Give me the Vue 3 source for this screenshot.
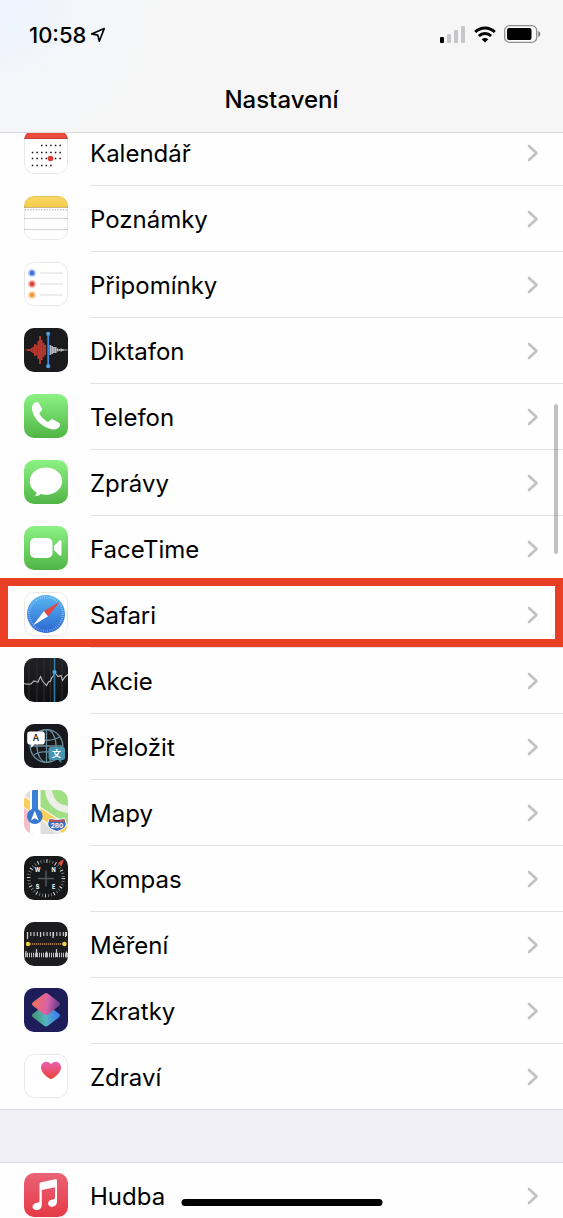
<template>
  <div class="screen">
    <header class="header">
      <div class="status">
        <div class="clock">
          <span>10:58</span>
          <svg class="location" viewBox="0 0 16 16">
            <path d="M14.2 1.6 1.6 6.9l6.2 1.2 1.5 6.2z" fill="none" stroke="#000" stroke-width="1.6" stroke-linejoin="round" />
          </svg>
        </div>
        <div class="indicators">
          <svg class="signal" viewBox="0 0 26 17">
            <rect x="0" y="11" width="4" height="6" rx="1" fill="#000" />
            <rect x="7" y="8" width="4" height="9" rx="1" fill="#c6c6c8" />
            <rect x="14" y="4" width="4" height="13" rx="1" fill="#c6c6c8" />
            <rect x="21" y="0" width="4" height="17" rx="1" fill="#c6c6c8" />
          </svg>
          <svg class="wifi" viewBox="0 0 22 17">
            <g fill="none" stroke="#000" stroke-width="2.9">
              <path d="M1.2 6.1C6.6.6 15.4.6 20.8 6.1" />
              <path d="M4.9 10c3.4-3.4 8.800-3.400 12.200 0" />
            </g>
            <path d="M7.7 13.2c1.9-1.7 4.7-1.7 6.6 0L11 16.5z" fill="#000" />
          </svg>
          <svg class="battery" viewBox="0 0 37 18">
            <rect x="0.7" y="0.7" width="32" height="16.6" rx="4.8" fill="#fafafa" stroke="#8e8e90" stroke-width="1.3" />
            <rect x="3" y="3" width="24.5" height="12" rx="2" fill="#000" />
            <path d="M34.300 6v6c2.600-1 2.600-5 0-6z" fill="#77777a" />
          </svg>
        </div>
      </div>
      <h1 class="title">Nastavení</h1>
    </header>

    <main class="content">
      <nav v-for="(group, g) in groups" :key="g" class="group">
        <a v-for="item in group" :key="item.icon" href="#" class="row" :class="{ marked: item.marked }">
          <svg class="icon" viewBox="0 0 44 44" aria-hidden="true">
            <g v-if="item.icon === 'calendar'">
              <rect width="44" height="44" fill="#fff" />
              <rect width="44" height="9" fill="#ea4b3d" />
              <rect y="8" width="44" height="1" fill="#c93a2e" />
              <g stroke="#111" stroke-width="1.5" stroke-dasharray="1.5 3.1">
                <path d="M17 15.5h20.5M7.8 22.5h29.7M7.8 28.500h29.700M7.800 35.500h20.500" />
              </g>
              <circle cx="26.500" cy="28.500" r="2.800" fill="#dc3a30" />
            </g>

            <g v-else-if="item.icon === 'notes'">
              <rect width="44" height="44" fill="#fff" />
              <rect width="44" height="11" fill="url(#notes-top)" />
              <path d="M0 11.500h44" stroke="#c9b98a" />
              <path d="M1 13.800h43" stroke="#b9b9b9" stroke-width="1.500" stroke-dasharray="1.200 1.500" />
              <path d="M0 22.500h44M0 33.500h44" stroke="#d2d2d4" />
            </g>

            <g v-else-if="item.icon === 'reminders'">
              <rect width="44" height="44" fill="#fff" />
              <g v-for="dot in reminderDots" :key="dot.y">
                <circle cx="8" :cy="dot.y" r="3.800" :fill="dot.color" fill-opacity="0.450" />
                <circle cx="8" :cy="dot.y" r="2.200" :fill="dot.color" />
                <path :d="`M16 ${dot.y}h23`" stroke="#dcdce0" />
              </g>
            </g>

            <g v-else-if="item.icon === 'memos'">
              <rect width="44" height="44" fill="#1b1b1e" />
              <rect
                v-for="(h, i) in redWave"
                :key="'r' + i"
                :x="1.5 + i * 1.7"
                :y="22 - h"
                width="1.8"
                :height="h * 2"
                fill="#bd3930"
              />
              <rect
                v-for="(h, i) in grayWave"
                :key="'g' + i"
                :x="25.5 + i * 1.8"
                :y="22 - h"
                width="1.7"
                :height="h * 2"
                fill="#b9b9bd"
              />
              <path d="M24.200 6v32" stroke="#3f87d4" stroke-width="1.800" />
              <circle cx="24.200" cy="5.800" r="2.100" fill="#4f9be8" />
              <circle cx="24.200" cy="38.200" r="2.100" fill="#4f9be8" />
            </g>

            <g v-else-if="item.icon === 'phone'">
              <rect width="44" height="44" fill="url(#green)" />
              <path
                d="M8.500 11.500c1-2 2.700-3.400 4.400-3.400 1.100 0 1.900.8 2.700 2.200l2 3.600c.7 1.300.5 2.300-.4 3.200l-1.300 1.300c-.6.600-.6 1.200-.2 1.900 1.900 3.100 4.200 5.400 7.300 7.300.7.400 1.300.4 1.900-.2l1.400-1.300c.9-.9 1.900-1.100 3.200-.4l4.700 2.500c1.700.9 2.300 1.900 1.900 3.100-.8 2.500-3.300 4.300-6.400 4.300-10.200-.8-21.700-11.500-21.700-21.800 0-.8.100-1.500.5-2.300z"
                fill="#fff"
              />
            </g>

            <g v-else-if="item.icon === 'messages'">
              <rect width="44" height="44" fill="url(#green)" />
              <path
                d="M22 7.600c9 0 16.200 6 16.200 13.600S31 34.700 22 34.700c-1.900 0-3.700-.3-5.400-.7-1.300 1.300-3.400 2.300-5.900 2.300 1.200-1 1.800-2.400 1.900-3.900-4.200-2.500-6.800-6.600-6.800-11.200C5.800 13.600 13 7.600 22 7.600z"
                fill="#fff"
              />
            </g>

            <g v-else-if="item.icon === 'facetime'">
              <rect width="44" height="44" fill="url(#green)" />
              <rect x="6" y="12" width="22.500" height="20" rx="5" fill="#fff" />
              <path d="M30 19.800l5.300-5c1-.9 2.200-.5 2.200.8v12.800c0 1.300-1.200 1.700-2.200.8l-5.300-5z" fill="#fff" />
            </g>

            <g v-else-if="item.icon === 'safari'">
              <rect width="44" height="44" fill="#fff" />
              <circle cx="22" cy="22" r="19" fill="url(#safari-disc)" />
              <circle cx="22" cy="22" r="16.800" fill="none" stroke="#cfe6fb" stroke-opacity="0.600" stroke-width="2" stroke-dasharray="0.700 1.500" />
              <path d="M36.200 9.500 19.800 19.200 24 24.200z" fill="#e5473f" />
              <path d="M9 33.500 19.800 19.200 24 24.200z" fill="#fff" />
            </g>

            <g v-else-if="item.icon === 'stocks'">
              <rect width="44" height="44" fill="url(#stocks-bg)" />
              <path d="M5 0v44M13 0v44M20 0v44M26.500 0v44M38 0v44" stroke="#2e2e33" stroke-width="1" />
              <path
                d="M0 25.500l3 .8 4-.4 3-3 2 .6 2 .5 2.500-5.500 2 4.500 4 4.500 2-3.500 2-1 1-3 2-2 1-3.500 1.500 1.500 2 2.500 3-1 1.500 5 2.500-3.500 3-2.500"
                fill="none"
                stroke="#bdbdba"
                stroke-width="1.100"
              />
              <path d="M30.500 0v44" stroke="#2c78a8" stroke-width="1.600" />
              <circle cx="30.500" cy="14" r="2.100" fill="#4aa8e0" />
            </g>

            <g v-else-if="item.icon === 'translate'">
              <rect width="44" height="44" fill="#18191c" />
              <g fill="none" stroke="#688c99" stroke-width="1.300">
                <circle cx="22.500" cy="22" r="16.300" />
                <ellipse cx="22.500" cy="22" rx="9.500" ry="16.300" />
                <path d="M22.500 5.500v33M6.200 22h32.600M9.500 13c8 4.500 18 4.500 26 0M9.500 31c8-4.500 18-4.500 26 0" />
              </g>
              <path d="M6 7.500h12a2.800 2.800 0 0 1 2.800 2.800v7.400a2.800 2.800 0 0 1-2.800 2.800h-7.500l-3.300 3.300v-3.300H6a2.800 2.800 0 0 1-2.800-2.800v-7.400A2.800 2.800 0 0 1 6 7.500z" fill="#fff" />
              <text x="12" y="17.300" class="glyph thin" font-size="9">A</text>
              <path d="M27 23h11.500a2.500 2.500 0 0 1 2.500 2.500v8a2.500 2.500 0 0 1-2.500 2.500h-1.200v3l-3-3H27a2.500 2.500 0 0 1-2.500-2.500v-8A2.500 2.500 0 0 1 27 23z" fill="#4696b2" />
              <text x="32.500" y="33" class="glyph" font-size="9">文</text>
            </g>

            <g v-else-if="item.icon === 'maps'">
              <rect width="44" height="44" fill="#e9e8e2" />
              <path d="M16 0h28v34L16 17z" fill="#a0df84" />
              <path d="M0 14l12 8v22H0z" fill="#f3bdca" />
              <path d="M24.500-1C25 11 33 19 45 19.500" fill="none" stroke="#eeeee8" stroke-width="7" />
              <path d="M-2 10.500 46 43" stroke="#fff" stroke-width="10" />
              <path d="M-2 10.500 46 43" stroke="#f9cf5b" stroke-width="8.500" />
              <path d="M0 0h6v9L0 5z" fill="#dfe0dc" />
              <path d="M16 30l16 14H16z" fill="#dededd" />
              <rect x="6" width="10.500" height="44" fill="#fff" />
              <rect x="8" width="6" height="26" fill="#3b80d8" />
              <circle cx="10.800" cy="26.300" r="7.800" fill="#3579cf" />
              <path d="M10.800 20.800l3.900 9.700-3.900-2.200-3.900 2.200z" fill="#fff" />
              <path d="M25.500 28.500c4 1 11 1 15 0 .8 1.600 1.300 3 1.700 4.700.7 4.500-4.200 6.600-9.200 8.300-5-1.700-9.900-3.800-9.200-8.300.4-1.700.9-3.100 1.700-4.700z" fill="#3b6fc0" stroke="#fff" stroke-width="1" />
              <path d="M25.700 29.200c4 1 10.600 1 14.600 0l.9 2.600H24.800z" fill="#cc4b4b" />
              <text x="33" y="38" class="glyph" font-size="6.500">280</text>
            </g>

            <g v-else-if="item.icon === 'compass'">
              <rect width="44" height="44" fill="#17181a" />
              <circle cx="22" cy="22.300" r="17.300" fill="none" stroke="#8d8d90" stroke-width="3.200" stroke-dasharray="0.700 2.320" />
              <circle cx="22" cy="22.300" r="17.300" fill="none" stroke="#d3d3d3" stroke-width="3.600" stroke-dasharray="0.900 8.160" />
              <path d="M22 14.500v16M14 22.500h16" stroke="#55565a" stroke-width="1.500" />
              <path d="M34.500 7l4.800-3.200L37.300 10z" fill="#e8503f" stroke="#e8503f" stroke-width="0.800" />
              <text x="13.500" y="16" class="glyph" font-size="5.500">W</text>
              <text x="29.700" y="16" class="glyph" font-size="5.500">N</text>
              <text x="13.500" y="32.500" class="glyph" font-size="5.500">S</text>
              <text x="29.700" y="32.500" class="glyph" font-size="5.500">E</text>
            </g>

            <g v-else-if="item.icon === 'measure'">
              <rect width="44" height="44" fill="#1c1c1e" />
              <path d="M3 12h41" stroke="#d0d0d0" stroke-width="4" stroke-dasharray="1.100 2.150" />
              <path d="M3.500 10v7M16.500 10v5M29 10v6M41.500 10v5" stroke="#d0d0d0" stroke-width="1.200" />
              <path d="M1 33h43" stroke="#c4c4c4" stroke-width="4.500" stroke-dasharray="1 1" />
              <path d="M2 29v6M12.500 27v8M22.500 29.500v6M32.500 27v8M42.500 29.500v6" stroke="#c4c4c4" stroke-width="1.200" />
              <path d="M4 22h36" stroke="#c08b52" stroke-width="1.600" stroke-dasharray="1.300 0.700" />
              <circle cx="4" cy="22" r="2.200" fill="#f7cf45" />
              <circle cx="40.500" cy="22" r="2.200" fill="#f7cf45" />
            </g>

            <g v-else-if="item.icon === 'shortcuts'">
              <rect width="44" height="44" fill="#1d1d59" />
              <path d="M9.200 25.500 22 16l12.800 9.500c1.600 1.200 1.600 2.700 0 3.900l-10.500 8.100c-1.500 1.200-3.100 1.200-4.600 0L9.200 29.400c-1.600-1.200-1.600-2.700 0-3.900z" fill="url(#sc-bottom)" />
              <path d="M19.700 5.900c1.500-1.200 3.100-1.200 4.600 0l10.500 8.200c1.600 1.200 1.600 2.700 0 3.900L24.300 26.200c-1.500 1.200-3.100 1.200-4.600 0L9.200 18c-1.600-1.200-1.600-2.700 0-3.900z" fill="url(#sc-top)" />
            </g>

            <g v-else-if="item.icon === 'health'">
              <rect width="44" height="44" fill="#fff" />
              <path d="M27 25.200c-1.500-.3-10-5.700-10-11.700 0-3.500 2.400-5.800 5.300-5.800 2 0 3.700.9 4.700 2.500 1-1.600 2.700-2.500 4.700-2.500 2.900 0 5.300 2.300 5.300 5.800 0 6-8.500 11.400-10 11.700z" fill="url(#heart)" />
            </g>

            <g v-else-if="item.icon === 'music'">
              <rect width="44" height="44" fill="url(#music-bg)" />
              <path
                d="M15.500 11.300c0-1.200.6-1.900 1.800-2.100l13.800-3c1.200-.2 1.900.3 1.900 1.500v21.100c0 2.900-1.900 4.700-4.600 5-2.600.3-4.300-1.200-4.300-3.200 0-2.100 1.400-3.400 3.700-3.900l1.900-.4c1-.2 1.300-.8 1.300-1.700V14.200L17.800 17v15c0 2.900-1.700 4.700-4.600 5-2.800.3-4.700-1.200-4.700-3.200 0-2.100 1.500-3.400 3.900-3.900l1.700-.4c1-.2 1.400-.8 1.400-1.700z"
                fill="#fff"
              />
            </g>

            <rect
              v-if="item.outlined"
              x="0.5"
              y="0.5"
              width="43"
              height="43"
              rx="9.5"
              fill="none"
              stroke="#000"
              stroke-opacity="0.09"
            />
          </svg>
          <span class="body">
            <span class="label">{{ item.label }}</span>
            <svg class="chevron" viewBox="0 0 12 18" aria-hidden="true">
              <path d="M2 2l7.500 7L2 16" />
            </svg>
          </span>
        </a>
      </nav>
    </main>

    <div class="scrollbar"></div>
    <div class="home-bar"></div>

    <!-- shared gradients for the app icons -->
    <svg class="defs" width="0" height="0" aria-hidden="true">
      <defs>
        <linearGradient id="green" x1="0" y1="0" x2="0" y2="1">
          <stop offset="0" stop-color="#8cf284" />
          <stop offset="1" stop-color="#50b545" />
        </linearGradient>
        <linearGradient id="notes-top" x1="0" y1="0" x2="0" y2="1">
          <stop offset="0" stop-color="#f9da68" />
          <stop offset="1" stop-color="#f3cb45" />
        </linearGradient>
        <linearGradient id="safari-disc" x1="0" y1="0" x2="0" y2="1">
          <stop offset="0" stop-color="#58b7f3" />
          <stop offset="1" stop-color="#2c66d0" />
        </linearGradient>
        <linearGradient id="stocks-bg" x1="0" y1="0" x2="0" y2="1">
          <stop offset="0" stop-color="#222226" />
          <stop offset="1" stop-color="#0f0f11" />
        </linearGradient>
        <linearGradient id="sc-top" x1="0.1" y1="0.5" x2="0.9" y2="0.6">
          <stop offset="0" stop-color="#ee6d62" />
          <stop offset="0.55" stop-color="#d962a8" />
          <stop offset="1" stop-color="#74408f" />
        </linearGradient>
        <linearGradient id="sc-bottom" x1="0.1" y1="0.5" x2="0.9" y2="0.4">
          <stop offset="0" stop-color="#47977f" />
          <stop offset="0.45" stop-color="#55b5c2" />
          <stop offset="1" stop-color="#3a82ef" />
        </linearGradient>
        <linearGradient id="heart" x1="0" y1="0" x2="0" y2="1">
          <stop offset="0" stop-color="#ea5fb0" />
          <stop offset="1" stop-color="#ea4335" />
        </linearGradient>
        <linearGradient id="music-bg" x1="0" y1="0" x2="0" y2="1">
          <stop offset="0" stop-color="#ea6376" />
          <stop offset="1" stop-color="#e63a46" />
        </linearGradient>
      </defs>
    </svg>
  </div>
</template>

<script setup>
const groups = [
  [
    { icon: 'calendar', label: 'Kalendář', outlined: true },
    { icon: 'notes', label: 'Poznámky', outlined: true },
    { icon: 'reminders', label: 'Připomínky', outlined: true },
    { icon: 'memos', label: 'Diktafon' },
    { icon: 'phone', label: 'Telefon' },
    { icon: 'messages', label: 'Zprávy' },
    { icon: 'facetime', label: 'FaceTime' },
    { icon: 'safari', label: 'Safari', outlined: true, marked: true },
    { icon: 'stocks', label: 'Akcie' },
    { icon: 'translate', label: 'Přeložit' },
    { icon: 'maps', label: 'Mapy' },
    { icon: 'compass', label: 'Kompas' },
    { icon: 'measure', label: 'Měření' },
    { icon: 'shortcuts', label: 'Zkratky' },
    { icon: 'health', label: 'Zdraví', outlined: true }
  ],
  [{ icon: 'music', label: 'Hudba' }]
];

const reminderDots = [
  { y: 11, color: '#3a72e0' },
  { y: 22, color: '#dd4038' },
  { y: 33, color: '#ee9a3a' }
];

// half heights of the waveform bars
const redWave = [0.5, 1, 1, 2, 3, 6, 5, 9, 14, 10, 7, 5];
const grayWave = [5, 4, 3, 3, 1.5, 1, 1.5, 1, 0.5, 0.5];
</script>

<style>
body {
  margin: 0;
  background: #fefefe;
}
</style>

<style scoped>
.screen {
  position: relative;
  display: flex;
  flex-direction: column;
  height: 100vh;
  overflow: hidden;
  background: #fefefe;
  color: #000;
  font-family: Inter, "Liberation Sans", sans-serif;
}

.header {
  position: relative;
  z-index: 1;
  flex-shrink: 0;
  background: radial-gradient(circle at 0 0, #ecf4fe 0, #f4f6f9 90px, #f6f6f6 170px);
  border-bottom: 1px solid #d9d9db;
}

.status {
  display: flex;
  justify-content: space-between;
  align-items: center;
  height: 68px;
  padding: 0 22px 0 29px;
}

.clock {
  display: flex;
  align-items: center;
  gap: 4px;
  padding-top: 1px;
  font-size: 22px;
  font-weight: 500;
}

.location {
  width: 16px;
  height: 16px;
}

.indicators {
  display: flex;
  align-items: center;
  gap: 8px;
}

.signal {
  width: 26px;
  height: 17px;
}
.wifi {
  width: 22px;
  height: 17px;
}
.battery {
  width: 37px;
  height: 18px;
}

.title {
  margin: 0;
  height: 64px;
  line-height: 64px;
  font-size: 24px;
  font-weight: 500;
  text-align: center;
}

.content {
  flex: 1;
  min-height: 0;
  margin-top: -13px; /* list is scrolled slightly under the header */
  background: #f1f0f6;
}

.group {
  border-bottom: 1px solid #dcdce0;
  background: #fefefe;
}
.group + .group {
  margin-top: 52px;
  border-top: 1px solid #dcdce0;
}

.row {
  position: relative;
  display: flex;
  height: 66px;
  padding-left: 24px;
  color: inherit;
  text-decoration: none;
}
.row:last-child {
  height: 65px;
}

.icon {
  flex-shrink: 0;
  width: 44px;
  height: 44px;
  margin: 10px 22px 0 0;
  border-radius: 10px;
  overflow: hidden;
}

.body {
  flex: 1;
  display: flex;
  justify-content: space-between;
  align-items: center;
  padding-right: 24px;
  border-bottom: 1px solid #e2e2e4;
}
.row:last-child .body {
  border-bottom: none;
}

.label {
  padding-top: 2px;
  font-size: 24px;
  line-height: 32px;
}

.chevron {
  width: 12px;
  height: 18px;
}
.chevron path {
  fill: none;
  stroke: #c2c2c5;
  stroke-width: 2.6;
  stroke-linecap: round;
  stroke-linejoin: round;
}

.marked::after {
  content: "";
  position: absolute;
  z-index: 2;
  inset: -4px 0 1px;
  border: 8px solid #e93f24;
}

.glyph {
  fill: #fff;
  font-family: Inter, "Noto Sans CJK SC", sans-serif;
  font-weight: 700;
  text-anchor: middle;
}
.glyph.thin {
  fill: #111;
  font-weight: 500;
}

.scrollbar {
  position: absolute;
  top: 404px;
  right: 5px;
  width: 4px;
  height: 150px;
  border-radius: 2px;
  background: rgba(0, 0, 0, 0.24);
}

.home-bar {
  position: absolute;
  bottom: 12px;
  left: 50%;
  width: 201px;
  height: 7px;
  border-radius: 4px;
  background: #000;
  transform: translateX(-50%);
}

.defs {
  position: absolute;
}
</style>
